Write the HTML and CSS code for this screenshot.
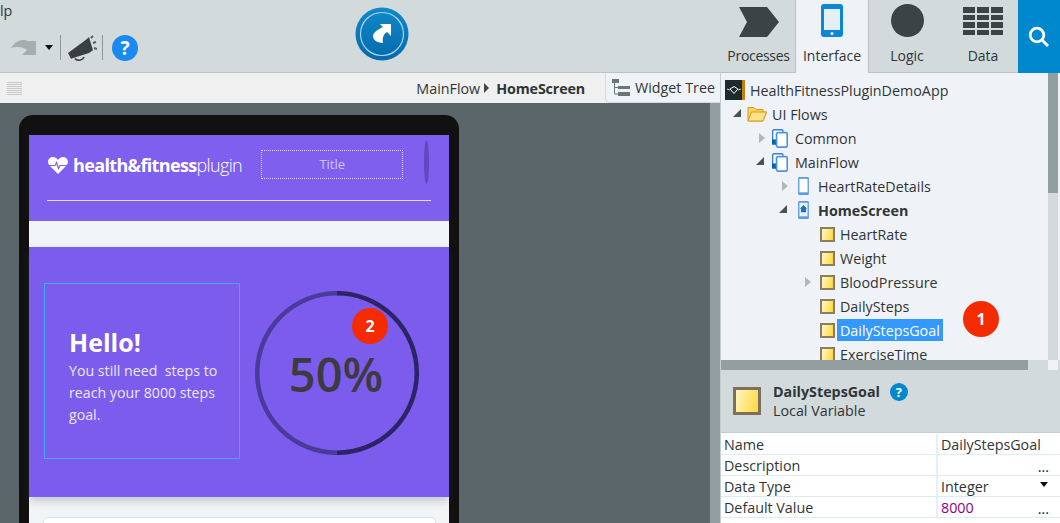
FILE: index.html
```html
<!DOCTYPE html>
<html lang="en">
<head>
    <meta charset="UTF-8">
    <meta name="viewport" content="width=device-width, initial-scale=1.0">
    <title>Service Studio - HomeScreen</title>
    <link rel="stylesheet" href="styles.css">
</head>
<body>

<svg class="sprite" width="0" height="0">
    <symbol id="flow" viewBox="0 0 17 20">
        <rect x="0.7" y="0.7" width="11" height="15" rx="1.5" fill="#fff" stroke="#2f7fd0" stroke-width="1.4"/>
        <rect x="0" y="11" width="4.5" height="5.5" fill="#0b5fa8"/>
        <rect x="4.8" y="3.8" width="11.4" height="15.4" rx="1.5" fill="#fff" stroke="#4d94dc" stroke-width="1.8"/>
    </symbol>
    <symbol id="screen" viewBox="0 0 12 20">
        <rect x="0" y="0" width="12" height="20" rx="1.5" fill="#5b9ee0"/>
        <rect x="1.5" y="2" width="9" height="15" fill="#fff"/>
    </symbol>
    <symbol id="home-screen" viewBox="0 0 12 20">
        <rect x="0" y="0" width="12" height="20" rx="1.5" fill="#5b9ee0"/>
        <rect x="1.5" y="2" width="9" height="15" fill="#e8f1fb"/>
        <path d="M6 4.5 L10 8.5 H8.8 V12.5 H3.2 V8.5 H2 Z" fill="#1f6fc0"/>
    </symbol>
</svg>

<header class="ribbon">
    <div class="ribbon-left">
        <div class="menu-text">lp</div>
        <div class="quick-tools">
            <svg class="redo" width="26" height="18" viewBox="0 0 26 18">
                <path d="M1 9 C5 3 9 1 13 1 C15 1 17 1.5 18 2 L26 2 L26 16 L12 16 L17 11 C14 8 7 7 1 9 Z" fill="#a7adad"/>
            </svg>
            <span class="drop-caret"></span>
            <span class="tool-sep"></span>
            <svg class="megaphone" width="30" height="26" viewBox="0 0 30 26">
                <path d="M1 18 L19 4.7 L22 2 L26 15.3 L22 18 L4 23.7 Z" fill="#39403f"/>
                <path d="M8 23.5 C10 26 15 26 17 22" fill="none" stroke="#39403f" stroke-width="1.6"/>
                <path d="M24 3 L26 1 M26 8 L29 7 M27 13 L30 14" stroke="#555c5c" stroke-width="2"/>
            </svg>
            <span class="tool-sep sep-second"></span>
            <span class="help-round">?</span>
        </div>
    </div>
    <div class="publish">
        <svg width="54" height="54" viewBox="0 0 54 54">
            <defs>
                <linearGradient id="pubFill" x1="0" y1="0" x2="0" y2="1">
                    <stop offset="0" stop-color="#1089c9"/>
                    <stop offset="1" stop-color="#0569ad"/>
                </linearGradient>
            </defs>
            <circle cx="27" cy="27" r="26.5" fill="url(#pubFill)"/>
            <circle cx="27" cy="27" r="21.5" fill="none" stroke="#a9d6ee" stroke-width="1.2"/>
            <path d="M25 17 H36 V29 L32 25 C29 27 27 30 28 36 C24 36 18 34 18 29 C18 25 24 22 28 20 Z" fill="#fff"/>
        </svg>
    </div>
    <nav class="tabs">
        <div class="tab tab-processes">
            <svg width="40" height="30" viewBox="0 0 40 30"><path d="M0 0 H28 L40 15 L28 30 H0 L8 15 Z" fill="#3b4344"/></svg>
            <span>Processes</span>
        </div>
        <div class="tab tab-active">
            <svg width="22" height="34" viewBox="0 0 22 34">
                <rect width="22" height="33" rx="3" fill="#0a88d8"/>
                <rect x="3" y="5" width="16" height="21" fill="#e6eef5"/>
                <circle cx="11" cy="29.5" r="1.6" fill="#e6eef5"/>
            </svg>
            <span>Interface</span>
        </div>
        <div class="tab tab-logic">
            <span class="logic-dot"></span>
            <span>Logic</span>
        </div>
        <div class="tab tab-data">
            <div class="data-grid">
                <i></i><i></i><i></i><i></i><i></i><i></i>
                <i></i><i></i><i></i><i></i><i></i><i></i>
            </div>
            <span>Data</span>
        </div>
        <div class="search-tab">
            <svg width="22" height="22" viewBox="0 0 22 22">
                <circle cx="9" cy="9" r="6.8" fill="none" stroke="#fff" stroke-width="2.8"/>
                <path d="M14 14 L20 20" stroke="#fff" stroke-width="3"/>
            </svg>
        </div>
    </nav>
</header>

<div class="workspace">
    <section class="left-pane">
        <div class="subbar">
            <div class="grip"></div>
            <div class="crumbs">
                <span>MainFlow</span>
                <span class="crumb-caret"></span>
                <strong>HomeScreen</strong>
            </div>
            <div class="widget-tab">
                <svg width="18" height="18" viewBox="0 0 18 18">
                    <path d="M0 0 H7 V4 H0 Z M6 7 H18 V10 H6 Z M6 13 H18 V17 H6 Z" fill="#6b7677"/>
                    <path d="M2.5 4 V15 H6 M2.5 8.5 H6" fill="none" stroke="#6b7677"/>
                </svg>
                <span>Widget Tree</span>
            </div>
        </div>
        <div class="canvas-wrap">
            <div class="canvas">
                <div class="phone">
                    <div class="app-header">
                        <div class="header-row">
                            <div class="logo">
                                <svg width="20" height="17" viewBox="0 0 20 17">
                                    <path d="M10 17 L1.5 8.5 C-1.5 5 0.5 0 5 0 C7.5 0 9 1.5 10 3 C11 1.5 12.5 0 15 0 C19.5 0 21.5 5 18.5 8.5 Z" fill="#fff"/>
                                    <path d="M0 8.5 H7 L8.5 5.5 L10.5 11.5 L12 8.5 H20" fill="none" stroke="#7f5fed" stroke-width="1.2"/>
                                </svg>
                                <span class="logo-text"><b>health&amp;fitness</b>plugin</span>
                            </div>
                            <div class="title-box">Title</div>
                            <div class="header-pill"></div>
                        </div>
                        <div class="header-line"></div>
                    </div>
                    <div class="app-gap"></div>
                    <div class="hero">
                        <div class="hello-box">
                            <h1>Hello!</h1>
                            <p>You still need &nbsp;steps to reach your 8000 steps goal.</p>
                        </div>
                        <div class="gauge">
                            <svg width="164" height="164" viewBox="0 0 164 164">
                                <path d="M82 2.2 A79.8 79.8 0 0 0 82 161.8" fill="none" stroke="#4a3a9c" stroke-width="4.5"/>
                                <path d="M82 2.2 A79.8 79.8 0 0 1 82 161.8" fill="none" stroke="#2d2468" stroke-width="4.5"/>
                            </svg>
                            <span>50%</span>
                            <b class="badge badge-two">2</b>
                        </div>
                    </div>
                    <div class="app-bottom">
                        <div class="app-card"></div>
                    </div>
                </div>
            </div>
            <div class="canvas-scroll"></div>
        </div>
    </section>

    <aside class="side">
        <div class="tree-panel">
            <div class="tree-main">
                <div class="tree">
                    <div class="row row-app">
                        <svg class="app-icon" width="20" height="20" viewBox="0 0 20 20">
                            <rect width="20" height="20" fill="#1d2a2e"/>
                            <rect x="17" width="3" height="20" fill="#c07f10"/>
                            <path d="M5 9 L9 6.5 L13 9 L9 13.5 Z" fill="none" stroke="#fff"/>
                            <path d="M2 9 L5 10 M13 10 L16 9" stroke="#cfd6d8"/>
                        </svg>
                        <span>HealthFitnessPluginDemoApp</span>
                    </div>
                    <div class="row lvl-1">
                        <span class="arrow open"></span>
                        <svg class="ico-folder" width="20" height="16" viewBox="0 0 20 16">
                            <path d="M1 15 V1.5 H7 L9 3.5 H16 V6 H19.5 L16 15 Z" fill="#fbd25e" stroke="#d99a1a"/>
                            <path d="M1 15 L4.5 6 H19.5 L16 15 Z" fill="#fde28c" stroke="#d99a1a"/>
                        </svg>
                        <span>UI Flows</span>
                    </div>
                    <div class="row lvl-2">
                        <span class="arrow closed"></span>
                        <svg class="ico-flow" width="16" height="19"><use href="#flow"/></svg>
                        <span>Common</span>
                    </div>
                    <div class="row lvl-2">
                        <span class="arrow open"></span>
                        <svg class="ico-flow" width="16" height="19"><use href="#flow"/></svg>
                        <span>MainFlow</span>
                    </div>
                    <div class="row lvl-3">
                        <span class="arrow closed"></span>
                        <svg class="ico-screen" width="11" height="18"><use href="#screen"/></svg>
                        <span>HeartRateDetails</span>
                    </div>
                    <div class="row lvl-3">
                        <span class="arrow open"></span>
                        <svg class="ico-screen" width="11" height="18"><use href="#home-screen"/></svg>
                        <b>HomeScreen</b>
                    </div>
                    <div class="row lvl-4"><span class="arrow"></span><span class="var-icon"></span><span class="var-name">HeartRate</span></div>
                    <div class="row lvl-4"><span class="arrow"></span><span class="var-icon"></span><span class="var-name">Weight</span></div>
                    <div class="row lvl-4"><span class="arrow closed"></span><span class="var-icon"></span><span class="var-name">BloodPressure</span></div>
                    <div class="row lvl-4"><span class="arrow"></span><span class="var-icon"></span><span class="var-name">DailySteps</span></div>
                    <div class="row lvl-4"><span class="arrow"></span><span class="var-icon"></span><span class="var-name selected">DailyStepsGoal</span></div>
                    <div class="row lvl-4"><span class="arrow"></span><span class="var-icon"></span><span class="var-name">ExerciseTime</span></div>
                    <b class="badge badge-one">1</b>
                </div>
                <div class="v-scroll"><div class="v-thumb"></div></div>
            </div>
            <div class="h-scroll">
                <div class="h-thumb"></div>
                <div class="h-corner"></div>
            </div>
        </div>

        <div class="prop-head">
            <span class="prop-icon"></span>
            <div class="prop-titles">
                <div class="prop-name"><b>DailyStepsGoal</b><span class="help-small">?</span></div>
                <div>Local Variable</div>
            </div>
        </div>

        <div class="props">
            <div class="prop-row"><span class="prop-key">Name</span><span class="prop-val">DailyStepsGoal</span></div>
            <div class="prop-row"><span class="prop-key">Description</span><span class="prop-val"><i class="dots">...</i></span></div>
            <div class="prop-row"><span class="prop-key">Data Type</span><span class="prop-val">Integer<i class="mini-caret"></i></span></div>
            <div class="prop-row"><span class="prop-key">Default Value</span><span class="prop-val purple">8000<i class="dots">...</i></span></div>
        </div>
    </aside>
</div>

</body>
</html>
```

FILE: styles.css
```css
* {
    box-sizing: border-box;
}

html, body {
    margin: 0;
    height: 100%;
    overflow: hidden;
}

body {
    width: 1060px;
    height: 523px;
    font-family: "Open Sans", "Noto Sans", sans-serif;
    font-size: 14.3px;
    color: #2f3536;
    background: #d2dadc;
}

.sprite {
    position: absolute;
}

/* top ribbon */
.ribbon {
    display: flex;
    height: 73px;
    background: #d2dadc;
    border-bottom: 1px solid #b8c4c4;
}

.ribbon-left {
    width: 355px;
}

.menu-text {
    height: 35px;
    padding-top: 1px;
}

.quick-tools {
    display: flex;
    align-items: center;
    height: 25px;
    padding-left: 10px;
}

.drop-caret {
    width: 0;
    height: 0;
    margin-left: 9px;
    border-left: 4px solid transparent;
    border-right: 4px solid transparent;
    border-top: 5px solid #111;
}

.tool-sep {
    width: 1px;
    height: 25px;
    margin-left: 7px;
    background: #8d9798;
}

.sep-second {
    margin-left: 5px;
}

.megaphone {
    margin-left: 6px;
}

.help-round {
    width: 26px;
    height: 26px;
    margin-left: 9px;
    border-radius: 50%;
    background: #1a8af0;
    color: #fff;
    font-weight: 700;
    font-size: 19px;
    line-height: 26px;
    text-align: center;
}

.publish {
    width: 54px;
    height: 54px;
    margin-top: 7px;
}

.tabs {
    display: flex;
    margin-left: auto;
    height: 73px;
}

.tab {
    display: flex;
    flex-direction: column;
    align-items: center;
    width: 73px;
    padding-top: 7px;
}

.tab > span:last-child {
    margin-top: auto;
    padding-bottom: 7px;
    font-size: 14px;
    line-height: 20px;
}

.tab-processes span {
    letter-spacing: -0.3px;
}

.tab-active {
    width: 74px;
    padding-top: 4px;
    background: #eff3f7;
    border-left: 1px solid #b8c4c4;
    border-right: 1px solid #b8c4c4;
    margin-bottom: -1px;
    height: 74px;
}

.tab-active > span:last-child {
    padding-bottom: 8px;
}

.tab-logic {
    width: 76px;
    padding-top: 4px;
}

.logic-dot {
    width: 33px;
    height: 33px;
    border-radius: 50%;
    background: #3b4344;
}

.tab-data {
    width: 73px;
    padding-left: 3px;
}

.data-grid {
    display: grid;
    grid-template-columns: repeat(3, 12px);
    grid-auto-rows: 5.5px;
    gap: 2px;
    width: 40px;
}

.data-grid i {
    background: #3b4344;
}

.search-tab {
    display: flex;
    align-items: center;
    justify-content: center;
    width: 42px;
    background: #0088cf;
}

/* area under the ribbon */
.workspace {
    display: flex;
    height: 450px;
}

.left-pane {
    display: flex;
    flex-direction: column;
    width: 721px;
    border-right: 1px solid #c4cdcf;
}

.subbar {
    display: flex;
    align-items: center;
    height: 30px;
    background: #f0f0f0;
}

.grip {
    width: 15px;
    height: 13px;
    margin-left: 7px;
    background: repeating-linear-gradient(#c6caca 0 1px, #eeeeee 1px 2px);
}

.crumbs {
    display: flex;
    align-items: center;
    margin-left: auto;
    margin-right: 20px;
}

.crumbs strong {
    letter-spacing: -0.15px;
}

.crumb-caret {
    width: 0;
    height: 0;
    margin: 0 7px 0 4px;
    border-top: 5px solid transparent;
    border-bottom: 5px solid transparent;
    border-left: 5px solid #444;
}

.widget-tab {
    display: flex;
    align-items: center;
    gap: 5px;
    width: 115px;
    height: 30px;
    padding-left: 6px;
    background: #eff3f7;
    border-left: 1px solid #d2dadc;
    border-bottom: 1px solid #d2dadc;
    border-bottom-left-radius: 5px;
    white-space: nowrap;
}

.canvas-wrap {
    display: flex;
    flex: 1;
    min-height: 0;
}

.canvas {
    flex: 1;
    padding: 12px 0 0 19px;
    background: #5a6669;
    overflow: hidden;
}

.canvas-scroll {
    width: 10px;
    background: #939ea1;
}

/* phone preview */
.phone {
    width: 440px;
    height: 460px;
    padding: 20px 10px 0;
    background: #111;
    border-radius: 14px 14px 0 0;
    color: #fff;
}

.app-header {
    height: 86px;
    padding: 5px 20px 0 18px;
    background: #7f5fed;
}

.header-row {
    display: flex;
    align-items: flex-start;
    height: 60px;
}

.logo {
    display: flex;
    align-items: center;
    gap: 5px;
    width: 214px;
    height: 40px;
    margin-top: 5px;
    margin-left: 1px;
}

.logo-text {
    font-size: 18px;
    letter-spacing: -0.65px;
    font-weight: 300;
    white-space: nowrap;
}

.logo-text b {
    font-weight: 700;
}

.title-box {
    width: 142px;
    height: 29px;
    margin-top: 10px;
    border: 1px dotted #ddd6f8;
    color: #cfc6f3;
    font-size: 13px;
    line-height: 27px;
    text-align: center;
}

.header-pill {
    width: 5px;
    height: 44px;
    margin-left: 21px;
    border-radius: 50%;
    background: #6447bd;
}

.header-line {
    height: 1px;
    margin-right: -2px;
    background: #e5dffa;
}

.app-gap {
    height: 26px;
    background: #f2f5f8;
}

.hero {
    display: flex;
    align-items: flex-start;
    height: 250px;
    padding: 36px 0 0 15px;
    background: #7b5ced;
    box-shadow: 0 4px 8px rgba(60, 70, 80, 0.25);
    position: relative;
}

.hello-box {
    display: flex;
    flex-direction: column;
    justify-content: center;
    width: 196px;
    height: 176px;
    padding: 10px 20px 0 24px;
    border: 1px solid #46a8f0;
}

.hello-box h1 {
    margin: 0 0 2px;
    font-size: 25px;
    font-weight: 700;
    line-height: 32px;
}

.hello-box p {
    margin: 0;
    font-size: 14.2px;
    line-height: 22px;
    color: #ece8fc;
}

.gauge {
    display: flex;
    align-items: center;
    justify-content: center;
    position: relative;
    width: 164px;
    height: 164px;
    margin: 8px 0 0 15px;
}

.gauge svg {
    position: absolute;
    left: 0;
    top: 0;
}

.gauge span {
    font-size: 47px;
    font-weight: 600;
    color: #3d3a40;
    padding: 1px 2px 0 0;
}

.app-bottom {
    height: 40px;
    padding: 20px 13px 0 14px;
    background: #f2f5f8;
}

.app-card {
    height: 30px;
    background: #fff;
    border: 1px solid #dde2e8;
    border-radius: 5px;
}

/* numbered callouts */
.badge {
    position: absolute;
    width: 36px;
    height: 36px;
    border-radius: 50%;
    background: #f52b00;
    color: #fff;
    font-size: 16px;
    font-weight: 700;
    line-height: 36px;
    text-align: center;
}

.badge-two {
    left: 97px;
    top: 17px;
}

.badge-one {
    left: 242px;
    top: 228px;
}

/* right side */
.side {
    flex: 1;
    display: flex;
    flex-direction: column;
    min-width: 0;
}

.tree-panel {
    height: 297px;
    background: #eff3f7;
    border-bottom: 1px solid #c4cdcf;
}

.tree-main {
    display: flex;
    height: 287px;
}

.tree {
    position: relative;
    flex: 1;
    padding-top: 5px;
    overflow: hidden;
}

.row {
    display: flex;
    align-items: center;
    height: 24px;
    white-space: nowrap;
}

.row-app {
    padding-left: 4px;
    gap: 5px;
}

.lvl-1 { padding-left: 12px; }
.lvl-2 { padding-left: 35px; }
.lvl-3 { padding-left: 58px; }
.lvl-4 { padding-left: 81px; }

/* every arrow takes the same room, so labels of a level line up */
.arrow {
    flex: none;
    width: 16px;
    height: 10px;
}

.arrow.open::before,
.arrow.closed::before {
    content: "";
    display: block;
    width: 0;
    height: 0;
}

.arrow.open::before {
    border-left: 8px solid transparent;
    border-bottom: 8px solid #4a5152;
}

.arrow.closed::before {
    margin-left: 3px;
    border-top: 5px solid transparent;
    border-bottom: 5px solid transparent;
    border-left: 6px solid #b0b8ba;
}

.ico-folder { margin: 0 5px 0 -2px; }
.ico-flow { margin-right: 7px; }
.ico-screen { margin: 0 9px 0 3px; }

.var-icon {
    flex: none;
    width: 15px;
    height: 15px;
    margin-left: 2px;
    border: 2px solid #8a7d63;
    background: linear-gradient(100deg, #fff8c4, #fdd63c);
}

.var-name {
    margin-left: 2px;
    padding: 2px 3px 0;
    line-height: 20px;
}

.selected {
    background: #3399ff;
    color: #fff;
}

.v-scroll {
    width: 10px;
    margin-right: 2px;
    background: #d2dadc;
}

.v-thumb {
    height: 120px;
    background: #939ea1;
}

.h-scroll {
    display: flex;
    height: 10px;
    background: #d2dadc;
    padding-right: 2px;
}

.h-thumb {
    width: 307px;
    background: #939ea1;
}

.h-corner {
    width: 10px;
    margin-left: auto;
    background: #eff3f7;
}

.prop-head {
    display: flex;
    align-items: center;
    gap: 12px;
    height: 61px;
    margin-top: 2px;
    padding: 0 0 2px 12px;
    background: #d2dadc;
    border-bottom: 1px solid #c4cdcf;
    line-height: 19px;
}

.prop-icon {
    width: 28px;
    height: 28px;
    border: 3px solid #7d6f5b;
    background: linear-gradient(110deg, #fff8c4, #fdd63c);
}

.prop-name {
    display: flex;
    align-items: center;
    gap: 10px;
}

.help-small {
    width: 18px;
    height: 18px;
    border-radius: 50%;
    background: #0088cf;
    color: #fff;
    font-size: 13px;
    font-weight: 700;
    line-height: 18px;
    text-align: center;
}

.props {
    flex: 1;
    padding-top: 1px;
    background: #fff;
}

.prop-row {
    display: flex;
    height: 21px;
    border-bottom: 1px solid #dcebf5;
    line-height: 21px;
}

.prop-key {
    width: 217px;
    padding-left: 3px;
    border-right: 2px solid #e6f0f7;
}

.prop-val {
    flex: 1;
    display: flex;
    justify-content: space-between;
    padding: 0 11px 0 3px;
}

.purple {
    color: #8b008b;
}

.dots {
    margin-left: auto;
    font-style: normal;
    color: #222;
    line-height: 24px;
}

.mini-caret {
    width: 0;
    height: 0;
    margin: 6px 1px 0 auto;
    border-left: 4px solid transparent;
    border-right: 4px solid transparent;
    border-top: 5px solid #111;
}
```
